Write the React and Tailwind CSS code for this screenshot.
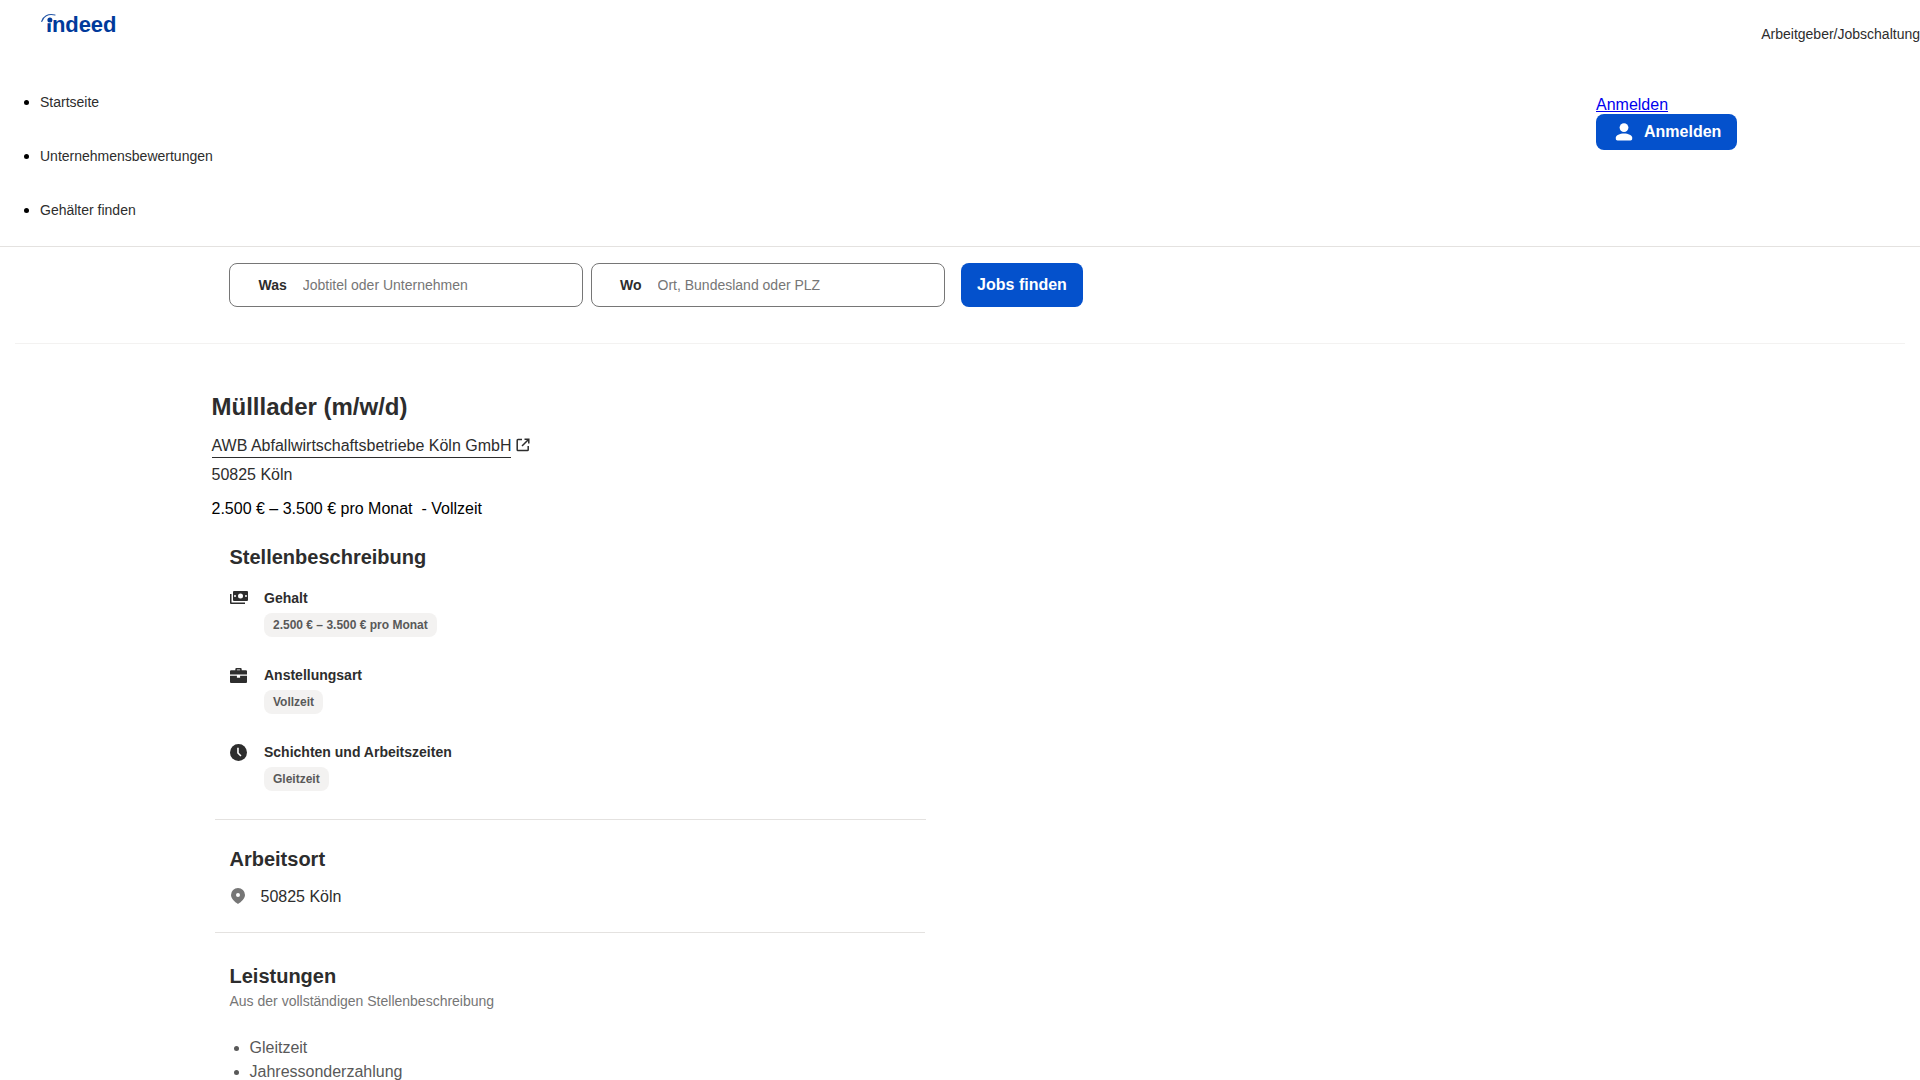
import React from 'react';

const sans = "font-['Liberation_Sans',Arial,sans-serif]";

// der i-Punkt und der Bogen liegen als Zeichnung über dem Schriftzug
const Logo = () => (
  <a href="#" className="relative block w-[76px] h-[24px] mt-[13px] ml-[41px]">
    <span className="absolute left-[5px] top-[-1px] text-[22px] leading-[26px] font-bold tracking-[-0.1px] text-[#003a9b]">indeed</span>
    <svg className="absolute left-0 top-0" width="18" height="12" viewBox="0 0 18 12" fill="none">
      <rect x="5" y="2" width="6.200" height="8.200" fill="#fff" />
      <path d="M.7 8.500C2 3.500 7 .2 14 2" stroke="#2557a7" strokeWidth="1.100" strokeLinecap="round" />
      <circle cx="8.900" cy="7" r="2.500" fill="#003a9b" />
    </svg>
  </a>
);

const PersonIcon = () => (
  <svg width="24" height="24" viewBox="0 0 24 24" fill="currentColor">
    <circle cx="12" cy="7.600" r="4.400" />
    <path d="M3.800 17.500c0-2.300 4-4 8.200-4s8.200 1.700 8.200 4v1.300c0 1-.7 1.700-1.700 1.700H5.500c-1 0-1.700-.7-1.700-1.700z" />
  </svg>
);

const ExternalIcon = () => (
  <svg width="16" height="16" viewBox="0 0 16 16" fill="none" stroke="#2d2d2d" strokeWidth="1.500">
    <path d="M7 2.500H3a.8.8 0 0 0-.8.8v9.400a.8.8 0 0 0 .8.8h9.400a.8.8 0 0 0 .8-.8V9" />
    <path d="M9.500 2.200h4.300v4.300M13.500 2.500 7 9" />
  </svg>
);

const MoneyIcon = () => (
  <svg width="18" height="14" viewBox="0 0 18 14" fill="#2d2d2d">
    <path fillRule="evenodd" d="M4 0h13a1 1 0 0 1 1 1v8a1 1 0 0 1-1 1H4a1 1 0 0 1-1-1V1a1 1 0 0 1 1-1zm6.500 2.500a2.500 2.500 0 1 0 0 5 2.500 2.500 0 0 0 0-5zM5 4a1 1 0 1 0 0 2 1 1 0 0 0 0-2zm11 0a1 1 0 1 0 0 2 1 1 0 0 0 0-2z" />
    <path d="M0 3h1.500v8.500H15V13H1a1 1 0 0 1-1-1z" />
  </svg>
);

const BriefcaseIcon = () => (
  <svg className="ml-[0.5px]" width="17" height="17" viewBox="0 0 16 16" fill="#2d2d2d">
    <path fillRule="evenodd" d="M5 3V2a1 1 0 0 1 1-1h4a1 1 0 0 1 1 1v1h4a1 1 0 0 1 1 1v3H0V4a1 1 0 0 1 1-1zm1.500-.6V3h3v-.6z" />
    <path d="M0 8.300h6.500V10h3V8.300H16V14a1 1 0 0 1-1 1H1a1 1 0 0 1-1-1z" />
  </svg>
);

const ClockIcon = () => (
  <svg className="ml-[0.5px]" width="17" height="17" viewBox="0 0 16 16">
    <circle cx="8" cy="8" r="8" fill="#2d2d2d" />
    <path d="M7.500 3.500v5l2.800 2.800" stroke="#fff" strokeWidth="1.500" fill="none" />
  </svg>
);

const PinIcon = () => (
  <svg width="14" height="16" viewBox="0 0 14 16">
    <path fillRule="evenodd" fill="#767676" d="M7 0a7 7 0 0 1 7 7c0 3.500-3.500 6.800-7 9-3.500-2.200-7-5.500-7-9a7 7 0 0 1 7-7zm0 5a2 2 0 1 0 0 4 2 2 0 0 0 0-4z" />
  </svg>
);

const details = [
  { icon: <MoneyIcon />, label: 'Gehalt', value: '2.500 € – 3.500 € pro Monat' },
  { icon: <BriefcaseIcon />, label: 'Anstellungsart', value: 'Vollzeit' },
  { icon: <ClockIcon />, label: 'Schichten und Arbeitszeiten', value: 'Gleitzeit' },
];

const App = () => {
  return (
    <div className={`${sans} bg-white min-h-screen text-[#2d2d2d] overflow-hidden h-[1080px]`}>
      {/* Kopfzeile */}
      <header className="border-b border-[#e4e2e0] h-[247px]">
        <div className="flex justify-between h-[75px]">
          <Logo />
          <a href="#" className="text-sm leading-[18px] mt-[25px] text-[#2d2d2d]">Arbeitgeber/Jobschaltung</a>
        </div>
        <div className="flex justify-between">
          <ul className="list-disc pl-10 text-black">
            {['Startseite', 'Unternehmensbewertungen', 'Gehälter finden'].map((item) => (
              <li key={item} className="h-[54px] leading-[54px]">
                <a href="#" className="text-sm text-[#2d2d2d]">{item}</a>
              </li>
            ))}
          </ul>
          <div className="w-[324px] pt-[21px]">
            <a href="#" className="block w-fit leading-[18px] text-[#0000ee] underline">Anmelden</a>
            <button className="flex items-center w-[141px] h-[36px] pl-[16px] gap-[8px] rounded-lg bg-[#0451cc] text-white font-bold">
              <PersonIcon />
              <span>Anmelden</span>
            </button>
          </div>
        </div>
      </header>

      {/* Suche */}
      <div className="mx-[15px] border-b border-[#f3f2f1] pt-[16px] pb-[36px] pl-[214px] flex">
        <label className="flex items-center w-[354px] h-[44px] border border-[#767676] rounded-lg pl-[28.5px] text-sm">
          <span className="font-bold mr-[16px]">Was</span>
          <input className="flex-1 outline-none placeholder:text-[#767676]" placeholder="Jobtitel oder Unternehmen" />
        </label>
        <label className="flex items-center w-[354px] h-[44px] border border-[#767676] rounded-lg pl-[28px] ml-[8px] text-sm">
          <span className="font-bold mr-[16px]">Wo</span>
          <input className="flex-1 outline-none placeholder:text-[#767676]" placeholder="Ort, Bundesland oder PLZ" />
        </label>
        <button className="w-[122px] h-[44px] ml-[16px] rounded-lg bg-[#0451cc] text-white font-bold">Jobs finden</button>
      </div>

      {/* Stellenanzeige */}
      <main className="ml-[211.5px] w-[714.5px]">
        <h1 className="mt-[46px] text-2xl leading-[34px] font-bold">Mülllader (m/w/d)</h1>
        <div className="mt-[10px] flex items-center h-[24px]">
          <a href="#" className="border-b border-[#2d2d2d] leading-[23px] h-[24px]">AWB Abfallwirtschaftsbetriebe Köln GmbH</a>
          <span className="ml-[4px] mb-[2px]"><ExternalIcon /></span>
        </div>
        <p className="mt-[5px] leading-[24px]">50825 Köln</p>
        <p className="mt-[10px] leading-[24px] text-black">2.500 € – 3.500 € pro Monat&nbsp; - Vollzeit</p>

        <section className="pl-[18px] mt-[22px]">
          <h2 className="text-xl leading-[28px] font-bold">Stellenbeschreibung</h2>
          <div className="mt-[17px]">
            {details.map((row) => (
              <div key={row.label} className="flex h-[77px]">
                <div className="w-[34.5px] shrink-0 h-[20px] flex items-center">{row.icon}</div>
                <div>
                  <div className="text-sm leading-[20px] font-bold">{row.label}</div>
                  <span className="inline-block mt-[5px] px-[9px] h-[24px] leading-[24px] rounded-lg bg-[#f3f2f1] text-xs font-bold text-[#595959]">{row.value}</span>
                </div>
              </div>
            ))}
          </div>
        </section>

        <section className="ml-[3.5px] border-t border-[#e4e2e0] pl-[14.5px] pt-[25px] pb-[23px]">
          <h2 className="text-xl leading-[28px] font-bold">Arbeitsort</h2>
          <div className="flex items-center mt-[12px] h-[24px]">
            <span className="ml-[1.5px] w-[29.5px] pb-[2px]"><PinIcon /></span>
            <span>50825 Köln</span>
          </div>
        </section>

        <section className="ml-[3.5px] mr-[1px] border-t border-[#e4e2e0] pl-[14.5px] pt-[29px]">
          <h2 className="text-xl leading-[28px] font-bold">Leistungen</h2>
          <p className="text-sm leading-[20px] text-[#767676] mt-[1px]">Aus der vollständigen Stellenbeschreibung</p>
          <ul className="list-disc pl-[20px] mt-[25px] text-[#595959] leading-[24px]">
            <li>Gleitzeit</li>
            <li>Jahressonderzahlung</li>
          </ul>
        </section>
      </main>
    </div>
  );
};

export default App;
